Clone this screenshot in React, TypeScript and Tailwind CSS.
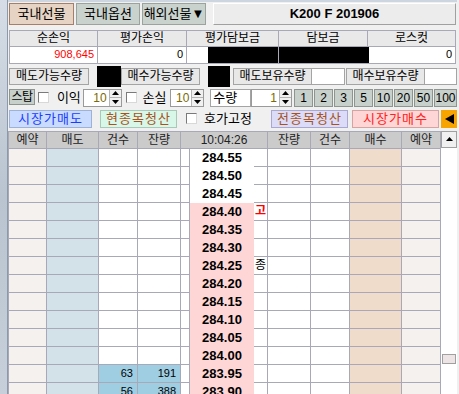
import type { JSX } from "react";

const prices = [
  "284.55", "284.50", "284.45", "284.40", "284.35", "284.30", "284.25",
  "284.20", "284.15", "284.10", "284.05", "284.00", "283.95", "283.90",
];

const sellRest: Record<number, [string, string]> = {
  12: ["63", "191"],
  13: ["56", "388"],
};

const Tri = ({ up }: { up: boolean }): JSX.Element => (
  <svg width="7" height="4" viewBox="0 0 7 4">
    <polygon points={up ? "0,4 7,4 3.5,0" : "0,0 7,0 3.5,4"} fill="#000" />
  </svg>
);

const Spinner = ({ value, w }: { value: string; w: string }): JSX.Element => (
  <div className={`flex h-[18px] border border-[#9a9a9a] bg-white ${w}`}>
    <div className="flex flex-1 items-center justify-end pr-[2px] text-[12px] text-[#7c6a00]">
      {value}
    </div>
    <div className="flex w-[12px] flex-col border-l border-[#b4b4b4]">
      <div className="flex flex-1 items-center justify-center border-b border-[#b4b4b4] bg-[#f0f0f0]">
        <Tri up />
      </div>
      <div className="flex flex-1 items-center justify-center bg-[#f0f0f0]">
        <Tri up={false} />
      </div>
    </div>
  </div>
);

const Check = (): JSX.Element => (
  <div className="h-[11px] w-[11px] border border-t-[#7a7a7a] border-l-[#7a7a7a] border-r-[#d8d8d8] border-b-[#d8d8d8] bg-white" />
);

const numBtn =
  "flex h-[18px] items-center justify-center border border-[#8e948f] bg-[#c8d0cb] text-[12px]";

const line = "border-[#a8a8b8]";

export default function App(): JSX.Element {
  return (
    <div className="flex h-[394px] w-[459px] overflow-hidden whitespace-nowrap bg-[#f0f0f0] font-[family-name:'Liberation_Sans','Noto_Sans_CJK_KR',sans-serif] text-black">
      <div className="w-[8px] shrink-0 border-r border-[#8c99a8] bg-gradient-to-b from-[#d6dde6] via-[#b9c4d0] to-[#c7d0da]" />
      <div className="flex w-[449px] flex-col border-t-2 border-[#cdd6e0]">
        {/* market tabs */}
        <div className="mt-[1px] flex h-[23px] pl-[1px]">
          <div className="flex w-[65px] items-center justify-center border border-[#a57f6c] bg-[#e6d3c3] text-[13px]">
            국내선물
          </div>
          <div className="ml-[2px] flex w-[64px] items-center justify-center border border-[#9ba39e] bg-[#c9d2cd] text-[13px]">
            국내옵션
          </div>
          <div className="ml-[2px] flex w-[64px] items-center justify-center border border-[#9ba39e] bg-[#c9d2cd] text-[13px]">
            해외선물▼
          </div>
          <div className="ml-[7px] flex w-[243px] items-center justify-center border border-t-white border-l-white border-r-[#a0a0a0] border-b-[#a0a0a0] bg-[#ececec] text-[13px] font-bold">
            K200 F 201906
          </div>
        </div>

        {/* balance table */}
        <div className={`mt-[5px] ml-[1px] flex w-[447px] flex-col border ${line}`}>
          <div className="flex h-[15px] bg-[#e9e9e9] text-[12px]">
            <div className={`flex w-[88px] items-center justify-center border-r ${line}`}>순손익</div>
            <div className={`flex w-[89px] items-center justify-center border-r ${line}`}>평가손익</div>
            <div className={`flex w-[92px] items-center justify-center border-r ${line}`}>평가담보금</div>
            <div className={`flex w-[89px] items-center justify-center border-r ${line}`}>담보금</div>
            <div className="flex flex-1 items-center justify-center">로스컷</div>
          </div>
          <div className={`flex h-[17px] border-t ${line} bg-white text-[11px]`}>
            <div className={`flex w-[88px] items-center justify-end border-r pr-[3px] ${line} text-[#ff0000]`}>
              908,645
            </div>
            <div className={`flex w-[89px] items-center justify-end border-r pr-[3px] ${line}`}>0</div>
            <div className={`flex w-[92px] justify-end border-r ${line}`}>
              <div className="w-[70px] bg-black" />
            </div>
            <div className="w-[90px] bg-black" />
            <div className="flex flex-1 items-center justify-end pr-[3px]">0</div>
          </div>
        </div>

        {/* possible quantity */}
        <div className="mt-[2px] flex h-[21px] items-center pl-[1px] text-[12px]">
          <div className="flex h-[17px] w-[80px] items-center justify-center border border-[#a4a4a4] bg-[#e8e8e8]">
            매도가능수량
          </div>
          <div className="ml-[8px] h-[21px] w-[24px] bg-black" />
          <div className="flex h-[17px] w-[79px] items-center justify-center border border-[#a4a4a4] bg-[#e8e8e8]">
            매수가능수량
          </div>
          <div className="ml-[8px] h-[21px] w-[22px] bg-black" />
          <div className="ml-[3px] flex h-[17px] w-[79px] items-center justify-center border border-[#a4a4a4] bg-[#e8e8e8]">
            매도보유수량
          </div>
          <div className="h-[17px] w-[33px] border border-l-0 border-[#a4a4a4] bg-white" />
          <div className="ml-[1px] flex h-[17px] w-[79px] items-center justify-center border border-[#a4a4a4] bg-[#e8e8e8]">
            매수보유수량
          </div>
          <div className="h-[17px] w-[32px] border border-l-0 border-[#a4a4a4] bg-white" />
        </div>

        {/* stop / qty */}
        <div className="mt-[2px] flex h-[18px] items-center pl-[1px] text-[12px]">
          <div className="flex h-[16px] w-[26px] items-center justify-center self-start border border-[#8e948f] bg-[#c8d0cb] text-[12px] tracking-[-0.5px]">
            스탑
          </div>
          <div className="ml-[3px]"><Check /></div>
          <span className="ml-[8px] w-[26px] text-[13px]">이익</span>
          <Spinner value="10" w="w-[39px]" />
          <div className="ml-[4px]"><Check /></div>
          <span className="ml-[6px] w-[28px] text-[13px]">손실</span>
          <Spinner value="10" w="w-[34px]" />
          <div className="ml-[6px] flex h-[18px] w-[41px] items-center border border-[#a4a4a4] bg-white pl-[2px] text-[13px]">
            수량
          </div>
          <Spinner value="1" w="w-[41px]" />
          <div className="ml-[2px] flex gap-[1px]">
            <div className={`${numBtn} w-[19px]`}>1</div>
            <div className={`${numBtn} w-[19px]`}>2</div>
            <div className={`${numBtn} w-[19px]`}>3</div>
            <div className={`${numBtn} w-[19px]`}>5</div>
            <div className={`${numBtn} w-[19px]`}>10</div>
            <div className={`${numBtn} w-[19px]`}>20</div>
            <div className={`${numBtn} w-[19px]`}>50</div>
            <div className={`${numBtn} w-[23px]`}>100</div>
          </div>
        </div>

        {/* market order buttons */}
        <div className="mt-[3px] flex h-[18px] items-center pl-[1px] text-[13px]">
          <div className="flex h-[18px] w-[83px] items-center justify-center border border-[#9fb2d6] bg-[#c9dcff] tracking-[1px] text-[#1c3cff]">
            시장가매도
          </div>
          <div className="ml-[8px] flex h-[18px] w-[77px] items-center justify-center border border-[#a9c9b8] bg-[#d9f7e9] tracking-[1px] text-[#a65320]">
            현종목청산
          </div>
          <div className="ml-[9px]"><Check /></div>
          <span className="ml-[7px] w-[67px]">호가고정</span>
          <div className="flex h-[18px] w-[77px] items-center justify-center border border-[#a9a9d0] bg-[#dcdcf8] tracking-[1px] text-[#a65320]">
            전종목청산
          </div>
          <div className="ml-[4px] flex h-[18px] w-[87px] items-center justify-center border border-[#d6a3a3] bg-[#ffd6d6] tracking-[1px] text-[#ff2020]">
            시장가매수
          </div>
          <div className="ml-[2px] flex h-[18px] w-[16px] items-center justify-center bg-[#f7a300]">
            <svg width="9" height="10" viewBox="0 0 9 10">
              <polygon points="9,0 9,10 0,5" fill="#000" />
            </svg>
          </div>
        </div>

        {/* order book */}
        <div className="mt-[3px] flex">
          <div className={`flex w-[433px] flex-col border-l border-t ${line}`}>
            <div className="flex h-[17px] bg-[#cbcbcb] text-[12px] text-[#222]">
              <div className={`flex w-[38px] items-center justify-center border-r border-b ${line}`}>예약</div>
              <div className={`flex w-[52px] items-center justify-center border-r border-b ${line}`}>매도</div>
              <div className={`flex w-[39px] items-center justify-center border-r border-b ${line}`}>건수</div>
              <div className={`flex w-[43px] items-center justify-center border-r border-b ${line}`}>잔량</div>
              <div className={`flex w-[87px] items-center justify-center border-r border-b ${line}`}>10:04:26</div>
              <div className={`flex w-[43px] items-center justify-center border-r border-b ${line}`}>잔량</div>
              <div className={`flex w-[39px] items-center justify-center border-r border-b ${line}`}>건수</div>
              <div className={`flex w-[52px] items-center justify-center border-r border-b ${line}`}>매수</div>
              <div className={`flex w-[39px] items-center justify-center border-r border-b ${line}`}>예약</div>
            </div>
            {prices.map((p, i) => {
              const rest = sellRest[i];
              const pink = i >= 3;
              return (
                <div key={p} className="flex h-[18px] text-[11px]">
                  <div className={`w-[38px] border-r border-b ${line} bg-[#f5f1ee]`} />
                  <div className={`w-[52px] border-r border-b ${line} bg-[#d3e1e8]`} />
                  <div className={`flex w-[39px] items-center justify-end border-r border-b pr-[4px] ${line} ${rest ? "bg-[#9fcde2]" : "bg-white"}`}>
                    {rest?.[0]}
                  </div>
                  <div className={`flex w-[43px] items-center justify-end border-r border-b pr-[4px] ${line} ${rest ? "bg-[#9fcde2]" : "bg-white"}`}>
                    {rest?.[1]}
                  </div>
                  <div className={`w-[9px] border-r border-b ${line} bg-white`} />
                  <div className={`flex w-[64px] items-center justify-center text-[13px] font-bold ${pink ? "bg-[#ffd6d6]" : "bg-white"}`}>
                    {p}
                  </div>
                  <div className={`flex w-[14px] items-center justify-center border-r border-b ${line} bg-white text-[12px]`}>
                    {i === 3 && <span className="font-bold text-[#ff0000]">고</span>}
                    {i === 6 && <span>종</span>}
                  </div>
                  <div className={`w-[43px] border-r border-b ${line} bg-white`} />
                  <div className={`w-[39px] border-r border-b ${line} bg-white`} />
                  <div className={`w-[52px] border-r border-b ${line} bg-[#f0dccb]`} />
                  <div className={`w-[39px] border-r border-b ${line} bg-[#f5f1ee]`} />
                </div>
              );
            })}
          </div>
          {/* scrollbar */}
          <div className="flex w-[16px] flex-col bg-white">
            <div className="flex h-[17px] items-center justify-center border border-[#a0a0a0] bg-[#f0f0f0]">
              <Tri up />
            </div>
            <div className="mx-[1px] mt-[206px] h-[10px] border border-[#a0a0a0] bg-[#ede5e5]" />
          </div>
        </div>
      </div>
    </div>
  );
}
